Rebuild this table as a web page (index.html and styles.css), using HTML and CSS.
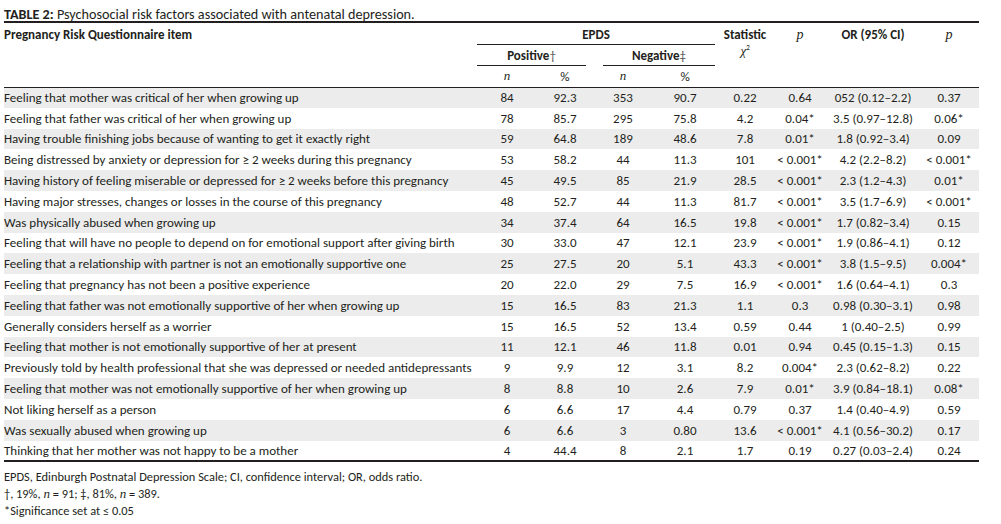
FILE: index.html
```html
<!DOCTYPE html>
<html lang="en">
<head>
<meta charset="utf-8">
<title>Table 2</title>
<link rel="stylesheet" href="styles.css">
</head>
<body>
<div class="page">
  <p class="caption"><span class="cap-label">TABLE 2:</span> Psychosocial risk factors associated with antenatal depression.</p>
  <table class="data">
    <colgroup>
      <col class="c-item"><col class="c-n1"><col class="c-p1"><col class="c-n2"><col class="c-p2"><col class="c-stat"><col class="c-pv"><col class="c-or"><col class="c-pv2">
    </colgroup>
    <thead>
      <tr class="h1">
        <th class="item-h" rowspan="3">Pregnancy Risk Questionnaire item</th>
        <th colspan="4" class="grp"><div class="rule">EPDS</div></th>
        <th rowspan="3" class="stat-h"><div>Statistic</div><div class="chi"><i>χ</i><sup>2</sup></div></th>
        <th rowspan="3" class="pv-h"><i>p</i></th>
        <th rowspan="3" class="or-h">OR (95% CI)</th>
        <th rowspan="3" class="pv-h"><i>p</i></th>
      </tr>
      <tr class="h2">
        <th colspan="2" class="grp pos"><div class="rule">Positive<span class="dag">†</span></div></th>
        <th colspan="2" class="grp neg"><div class="rule">Negative<span class="dag">‡</span></div></th>
      </tr>
      <tr class="h3">
        <th class="sub"><i>n</i></th>
        <th class="sub">%</th>
        <th class="sub"><i>n</i></th>
        <th class="sub">%</th>
      </tr>
    </thead>
    <tbody>
      <tr><td>Feeling that mother was critical of her when growing up</td><td>84</td><td>92.3</td><td>353</td><td>90.7</td><td>0.22</td><td>0.64</td><td>052 (0.12–2.2)</td><td>0.37</td></tr>
      <tr><td>Feeling that father was critical of her when growing up</td><td>78</td><td>85.7</td><td>295</td><td>75.8</td><td>4.2</td><td>0.04*</td><td>3.5 (0.97–12.8)</td><td>0.06*</td></tr>
      <tr><td>Having trouble finishing jobs because of wanting to get it exactly right</td><td>59</td><td>64.8</td><td>189</td><td>48.6</td><td>7.8</td><td>0.01*</td><td>1.8 (0.92–3.4)</td><td>0.09</td></tr>
      <tr><td>Being distressed by anxiety or depression for ≥ 2 weeks during this pregnancy</td><td>53</td><td>58.2</td><td>44</td><td>11.3</td><td>101</td><td>&lt; 0.001*</td><td>4.2 (2.2–8.2)</td><td>&lt; 0.001*</td></tr>
      <tr><td>Having history of feeling miserable or depressed for ≥ 2 weeks before this pregnancy</td><td>45</td><td>49.5</td><td>85</td><td>21.9</td><td>28.5</td><td>&lt; 0.001*</td><td>2.3 (1.2–4.3)</td><td>0.01*</td></tr>
      <tr><td>Having major stresses, changes or losses in the course of this pregnancy</td><td>48</td><td>52.7</td><td>44</td><td>11.3</td><td>81.7</td><td>&lt; 0.001*</td><td>3.5 (1.7–6.9)</td><td>&lt; 0.001*</td></tr>
      <tr><td>Was physically abused when growing up</td><td>34</td><td>37.4</td><td>64</td><td>16.5</td><td>19.8</td><td>&lt; 0.001*</td><td>1.7 (0.82–3.4)</td><td>0.15</td></tr>
      <tr><td>Feeling that will have no people to depend on for emotional support after giving birth</td><td>30</td><td>33.0</td><td>47</td><td>12.1</td><td>23.9</td><td>&lt; 0.001*</td><td>1.9 (0.86–4.1)</td><td>0.12</td></tr>
      <tr><td>Feeling that a relationship with partner is not an emotionally supportive one</td><td>25</td><td>27.5</td><td>20</td><td>5.1</td><td>43.3</td><td>&lt; 0.001*</td><td>3.8 (1.5–9.5)</td><td>0.004*</td></tr>
      <tr><td>Feeling that pregnancy has not been a positive experience</td><td>20</td><td>22.0</td><td>29</td><td>7.5</td><td>16.9</td><td>&lt; 0.001*</td><td>1.6 (0.64–4.1)</td><td>0.3</td></tr>
      <tr><td>Feeling that father was not emotionally supportive of her when growing up</td><td>15</td><td>16.5</td><td>83</td><td>21.3</td><td>1.1</td><td>0.3</td><td>0.98 (0.30–3.1)</td><td>0.98</td></tr>
      <tr><td>Generally considers herself as a worrier</td><td>15</td><td>16.5</td><td>52</td><td>13.4</td><td>0.59</td><td>0.44</td><td>1 (0.40–2.5)</td><td>0.99</td></tr>
      <tr><td>Feeling that mother is not emotionally supportive of her at present</td><td>11</td><td>12.1</td><td>46</td><td>11.8</td><td>0.01</td><td>0.94</td><td>0.45 (0.15–1.3)</td><td>0.15</td></tr>
      <tr><td>Previously told by health professional that she was depressed or needed antidepressants</td><td>9</td><td>9.9</td><td>12</td><td>3.1</td><td>8.2</td><td>0.004*</td><td>2.3 (0.62–8.2)</td><td>0.22</td></tr>
      <tr><td>Feeling that mother was not emotionally supportive of her when growing up</td><td>8</td><td>8.8</td><td>10</td><td>2.6</td><td>7.9</td><td>0.01*</td><td>3.9 (0.84–18.1)</td><td>0.08*</td></tr>
      <tr><td>Not liking herself as a person</td><td>6</td><td>6.6</td><td>17</td><td>4.4</td><td>0.79</td><td>0.37</td><td>1.4 (0.40–4.9)</td><td>0.59</td></tr>
      <tr><td>Was sexually abused when growing up</td><td>6</td><td>6.6</td><td>3</td><td>0.80</td><td>13.6</td><td>&lt; 0.001*</td><td>4.1 (0.56–30.2)</td><td>0.17</td></tr>
      <tr><td>Thinking that her mother was not happy to be a mother</td><td>4</td><td>44.4</td><td>8</td><td>2.1</td><td>1.7</td><td>0.19</td><td>0.27 (0.03–2.4)</td><td>0.24</td></tr>
    </tbody>
  </table>
  <div class="notes">
    <p>EPDS, Edinburgh Postnatal Depression Scale; CI, confidence interval; OR, odds ratio.</p>
    <p>†, 19%, <i class="it">n</i> = 91; ‡, 81%, <i class="it">n</i> = 389.</p>
    <p>*Significance set at ≤ 0.05</p>
  </div>
</div>
</body>
</html>
```

FILE: styles.css
```css
html, body {
  margin: 0;
  padding: 0;
  background: #ffffff;
}

.page {
  width: 975px;
  padding: 7px 0 0 4px;
  font-family: Carlito, Lato, "Liberation Sans", sans-serif;
  font-size: 13px;
  color: #231f20;
}

.caption {
  margin: 0;
  height: 14px;
  line-height: 14px;
  font-size: 14.2px;
}

.cap-label {
  font-weight: bold;
}

.data {
  width: 975px;
  border-collapse: collapse;
  table-layout: fixed;
  margin-top: 0;
  border-top: 2px solid #231f20;
  border-bottom: 2px solid #231f20;
}

.c-item { width: 473px; }
.c-n1 { width: 60px; }
.c-p1 { width: 56px; }
.c-n2 { width: 60px; }
.c-p2 { width: 64px; }
.c-stat { width: 56px; }
.c-pv { width: 54px; }
.c-or { width: 92px; }
.c-pv2 { width: 60px; }

th {
  font-weight: bold;
  padding: 0;
  vertical-align: top;
  text-align: center;
}

thead tr.h1 th { padding-top: 4px; }
thead tr.h1 { height: 22px; }
thead tr.h2 { height: 21px; }
thead tr.h3 { height: 21px; }
thead tr.h3 th { border-bottom: 1px solid #231f20; vertical-align: middle; }

.item-h {
  text-align: left;
  border-bottom: 1px solid #231f20;
}

.stat-h, .pv-h, .or-h {
  border-bottom: 1px solid #231f20;
}

.grp .rule {
  border-bottom: 1px solid #231f20;
  height: 17px;
  line-height: 15px;
}

.h1 .grp { padding: 4px 2px 0 0; }

.h2 .grp { padding-top: 3px; }
.h2 .pos { padding-right: 7px; }
.h2 .neg { padding-left: 10px; padding-right: 2px; }

.dag {
  font-weight: normal;
  color: #555;
}

.sub {
  font-weight: normal;
}

.sub i, .pv-h i, .chi i, .it {
  font-family: "Liberation Serif", "Times New Roman", serif;
  font-style: italic;
  font-size: 13px;
}

.pv-h i {
  font-size: 14px;
  font-weight: normal;
}

.chi {
  font-weight: normal;
  line-height: 12px;
}

.chi sup {
  font-size: 7px;
  vertical-align: 5px;
}

tbody tr {
  height: 20.8px;
}

tbody tr:nth-child(odd) {
  background: #ececec;
}

td {
  padding: 0;
  text-align: center;
  vertical-align: middle;
  white-space: nowrap;
}

td:first-child {
  text-align: left;
}

.notes {
  padding-top: 6px;
}

.notes p {
  margin: 0;
  height: 17px;
  line-height: 17px;
  font-size: 12.4px;
}
```
